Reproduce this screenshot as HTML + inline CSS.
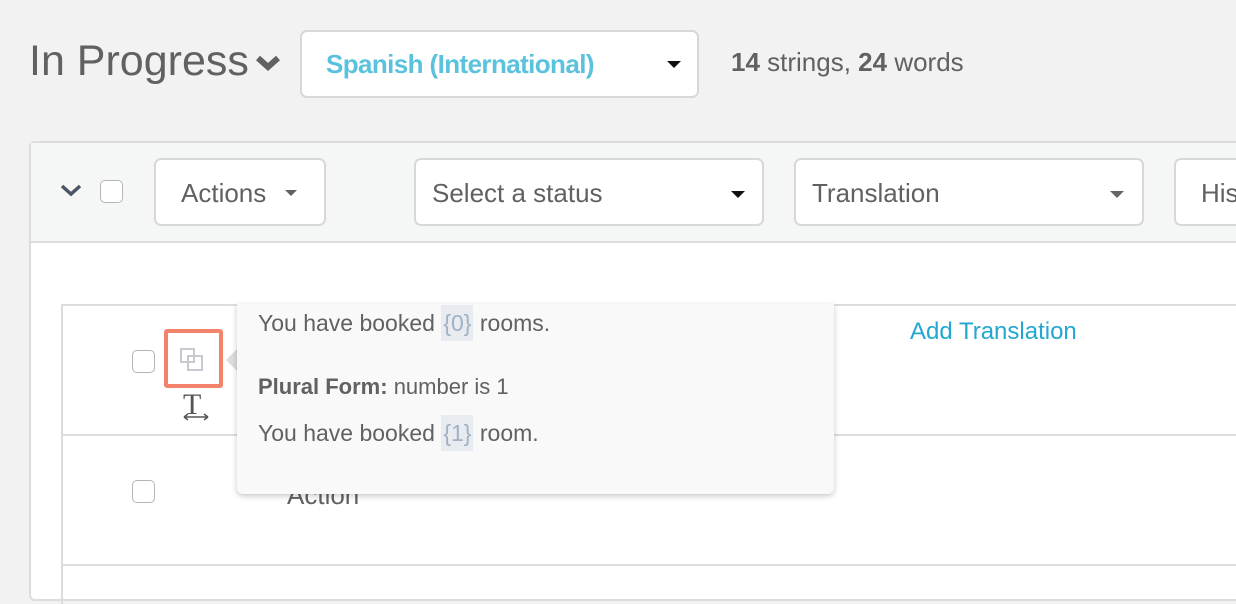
<!DOCTYPE html>
<html><head><style>
*{box-sizing:border-box;margin:0;padding:0}
body{width:1236px;height:588px;overflow:hidden;background:#f2f2f2;font-family:"Liberation Sans",sans-serif;color:#5f6163;position:relative}
.a{position:absolute}
.btn{position:absolute;background:#fff;border:2px solid #d8d8d8;border-radius:7px}
.caret{position:absolute;width:0;height:0;border-left:7px solid transparent;border-right:7px solid transparent;border-top:7px solid #111}
.cb{position:absolute;width:23px;height:23px;border:1.5px solid #b5b5b5;border-radius:5px;background:#fff}
.t{font-size:26px;color:#5f6163}
.ph{display:inline-block;background:#e8ecf1;color:#a0b1c4;padding:0 2px;line-height:36px}
</style></head><body>
<div class="a" style="left:29px;top:37px;font-size:43px;color:#5f6163">In Progress</div>
<svg class="a" style="left:255px;top:55px" width="26" height="18"><path d="M3 3 L13 12 L23 3" stroke="#5f6163" stroke-width="6" fill="none"/></svg>
<div class="btn" style="left:300px;top:30px;width:399px;height:68px"></div>
<div class="a" style="left:326px;top:49px;font-size:26px;font-weight:bold;letter-spacing:-0.6px;color:#5bc2de">Spanish (International)</div>
<div class="caret" style="left:667px;top:61px"></div>
<div class="a" style="left:731px;top:47px;font-size:26px;color:#5f6163"><b>14</b> strings, <b>24</b> words</div>

<div class="a" style="left:29px;top:141px;width:1300px;height:460px;background:#fff;border:2px solid #dcdcdc;border-radius:6px"></div>
<div class="a" style="left:31px;top:143px;width:1300px;height:100px;background:#f5f6f6;border-bottom:2px solid #dcdcdc"></div>
<svg class="a" style="left:60px;top:183px" width="22" height="16"><path d="M2 3 L11 11 L20 3" stroke="#4a5566" stroke-width="3.5" fill="none"/></svg>
<div class="cb" style="left:100px;top:180px"></div>
<div class="btn" style="left:154px;top:158px;width:172px;height:68px"></div>
<div class="a t" style="left:181px;top:178px">Actions</div>
<div class="caret" style="left:285px;top:190px;border-top-color:#5f6163;border-left-width:6px;border-right-width:6px;border-top-width:6px"></div>
<div class="btn" style="left:414px;top:158px;width:350px;height:68px"></div>
<div class="a t" style="left:432px;top:178px">Select a status</div>
<div class="caret" style="left:731px;top:191px"></div>
<div class="btn" style="left:794px;top:158px;width:350px;height:68px"></div>
<div class="a t" style="left:812px;top:178px">Translation</div>
<div class="caret" style="left:1110px;top:191px;border-top-color:#666"></div>
<div class="btn" style="left:1174px;top:158px;width:100px;height:68px"></div>
<div class="a t" style="left:1201px;top:178px">His</div>

<div class="a" style="left:61px;top:304px;width:1200px;height:300px;border-left:2px solid #dcdcdc;border-top:2px solid #dcdcdc"></div>
<div class="a" style="left:61px;top:434px;width:1200px;height:2px;background:#dcdcdc"></div>
<div class="a" style="left:61px;top:564px;width:1200px;height:2px;background:#dcdcdc"></div>
<div class="cb" style="left:132px;top:350px"></div>
<div class="cb" style="left:132px;top:480px"></div>
<div class="a" style="left:164px;top:329px;width:59px;height:59px;border:4px solid #f4836b;border-radius:3px;background:#fff"></div>
<svg class="a" style="left:176px;top:344px" width="36" height="36"><rect x="5" y="5" width="13" height="13" fill="none" stroke="#c6c9cf" stroke-width="2"/><rect x="12" y="12" width="14" height="14" fill="#fff" stroke="#c6c9cf" stroke-width="2"/><rect x="12" y="12" width="6" height="6" fill="none" stroke="#c6c9cf" stroke-width="2"/></svg>
<div class="a" style="left:183px;top:388px;font-family:'Liberation Serif',serif;font-size:30px;color:#555">T</div>
<svg class="a" style="left:182px;top:413px" width="28" height="8"><path d="M2 4 H26 M2 4 L6 1 M2 4 L6 7 M26 4 L22 1 M26 4 L22 7" stroke="#555" stroke-width="1.5" fill="none"/></svg>
<div class="a" style="left:287px;top:480px;font-size:26px;color:#5f6163">Action</div>
<div class="a" style="left:910px;top:318px;font-size:24px;color:#22a7d0">Add Translation</div>

<div class="a" style="left:226px;top:348px;width:0;height:0;border-top:12px solid transparent;border-bottom:12px solid transparent;border-right:12px solid #ddd"></div>
<div class="a" style="left:237px;top:304px;width:597px;height:190px;background:#f9f9f9;border-radius:0 0 6px 6px;box-shadow:0 2px 6px rgba(0,0,0,.22)"></div>
<div class="a" style="left:258px;top:305px;font-size:23px;line-height:36px;color:#5f6163">You have booked <span class="ph">{0}</span> rooms.</div>
<div class="a" style="left:258px;top:374px;font-size:22px;color:#5f6163"><b>Plural Form:</b> number is 1</div>
<div class="a" style="left:258px;top:415px;font-size:23px;line-height:36px;color:#5f6163">You have booked <span class="ph">{1}</span> room.</div>
</body></html>
